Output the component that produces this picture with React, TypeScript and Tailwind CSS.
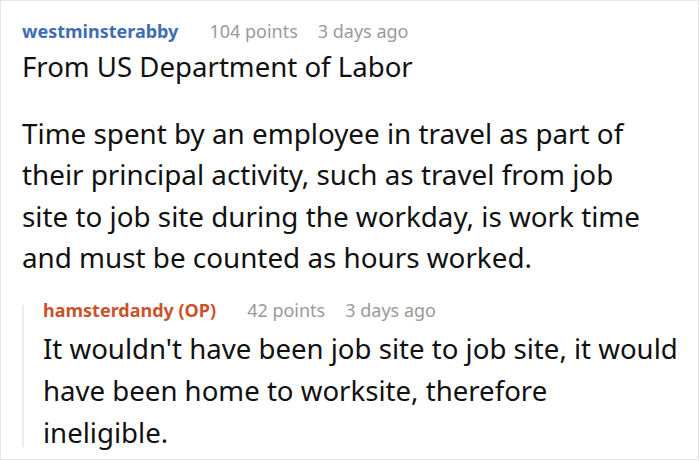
const font = { fontFamily: '"Noto Sans", "Open Sans", sans-serif' };

function Meta({ user, userClass, points, age }: { user: string; userClass: string; points: string; age: string }) {
  return (
    <div className="flex items-baseline text-[18px] leading-[24px]">
      <span className={`font-bold ${userClass}`}>{user}</span>
      <span className="ml-[31px] text-[#9a9a9a]">{points}</span>
      <span className="ml-[20px] text-[#9a9a9a]">{age}</span>
    </div>
  );
}

export default function App() {
  return (
    <div style={font} className="h-[461px] w-[700px] bg-white">
      <div className="h-[460px] w-[699px] border border-[#e6e6e6] pl-[21px] pt-[18px] text-[#111]">
        <Meta user="westminsterabby" userClass="text-[#3f6db2]" points="104 points" age="3 days ago" />
        <p className="mt-[6px] text-[27.6px] leading-[34px]">From US Department of Labor</p>
        <p className="mt-[30px] text-[27.8px] leading-[41.3px]">
          Time spent by an employee in travel as part of
          <br />
          their principal activity, such as travel from job
          <br />
          site to job site during the workday, is work time
          <br />
          and must be counted as hours worked.
        </p>

        <div className="mt-[20px] flex">
          <div className="mb-[7px] mt-[7px] w-[2px] bg-[#ececec]" />
          <div className="pl-[19px]">
            <Meta user="hamsterdandy (OP)" userClass="text-[#c9532b]" points="42 points" age="3 days ago" />
            <p className="mt-[6px] text-[27.6px] leading-[41.8px]">
              It wouldn't have been job site to job site, it would
              <br />
              have been home to worksite, therefore
              <br />
              ineligible.
            </p>
          </div>
        </div>
      </div>
    </div>
  );
}
